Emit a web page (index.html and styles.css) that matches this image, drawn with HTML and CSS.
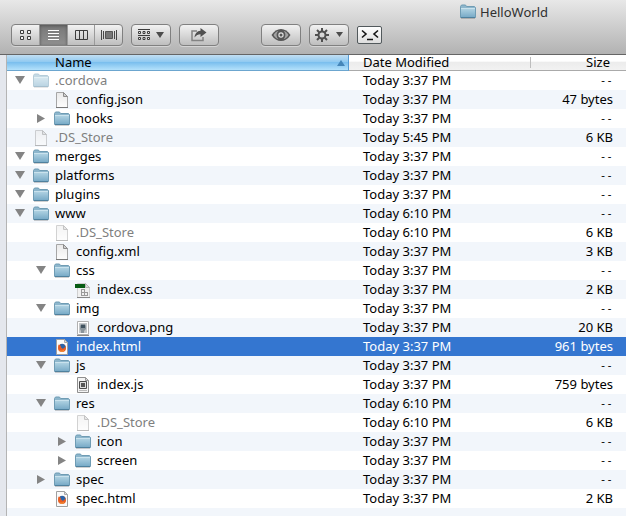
FILE: index.html
```
<!DOCTYPE html>
<html lang="en">
<head>
<meta charset="utf-8">
<title>HelloWorld</title>
<link rel="stylesheet" href="styles.css">
</head>
<body>
<svg class="defs" aria-hidden="true">
  <defs>
    <linearGradient id="folder-front" x1="0" y1="0" x2="0" y2="1"><stop offset="0" stop-color="#b4d5e4"/><stop offset="1" stop-color="#76a9c6"/></linearGradient>
    <linearGradient id="paper" x1="0" y1="0" x2="0" y2="1"><stop offset="0" stop-color="#e9e9e9"/><stop offset="1" stop-color="#fdfdfd"/></linearGradient>
  </defs>
  <symbol id="folder" viewBox="0 0 16 16">
    <path d="M.5 13V2.500l1-1.500h4l1 1.500h8l1 1V13z" fill="#8db6cc" stroke="#6f9cb4"/>
    <path d="M1 4h14v9.500H1z" fill="url(#folder-front)"/>
    <path d="M1 4.500h14" stroke="#c9e2ed"/>
    <path d="M.5 13.500h15" stroke="#4f819e"/>
    <path d="M1 14.500h14" stroke="#000" opacity=".18"/>
  </symbol>
  <symbol id="file" viewBox="0 0 16 16">
    <path d="M2.500.5h7l4 4v11h-11z" fill="url(#paper)" stroke="#a6a6a6"/>
    <path d="M9.500.5v4h4z" fill="#d0d0d0" stroke="#8d8d8d"/>
    <path d="M2 15.500h12" stroke="#777"/>
  </symbol>
  <symbol id="file-css" viewBox="0 0 16 16">
    <path d="M2.500 1.500h8l4 4v10h-12z" fill="#f0f0f0" stroke="#d0d0d0"/>
    <path d="M10.500 1.500v4h4z" fill="#ddd" stroke="#b5b5b5"/>
    <path d="M0 2h10v4H0z" fill="#075c15"/>
    <path d="M6.500 7v7M9.500 7v7M12.500 10v4M6 7.500h4M6 10.500h7M6 13.500h7" stroke="#999" fill="none"/>
    <path d="M2 15.500h13" stroke="#888"/>
  </symbol>
  <symbol id="file-image" viewBox="0 0 16 16">
    <path d="M2.500 1.500h11v13h-11z" fill="#fff" stroke="#b1b1b1"/>
    <path d="M4 3h8v10H4z" fill="#c3c7ca"/>
    <path d="M6 4h4l1 2v3L9 11v2H6v-2L5 9V6z" fill="#8a959c"/>
    <path d="M6 5h4v3H6z" fill="#40525f"/>
    <path d="M2 15.500h12" stroke="#888"/>
  </symbol>
  <symbol id="file-html" viewBox="0 0 16 16">
    <path d="M2.500.5h8l3 3v12h-11z" fill="#fafafa" stroke="#a0a0a0"/>
    <path d="M10.500.5v3h3z" fill="#ddd" stroke="#aaa"/>
    <circle cx="8" cy="9" r="4" fill="#e6652b"/>
    <path d="M6 5.500c2-1.500 5-.5 5.500 2.500L9 10 6.500 8z" fill="#2a63a9"/>
    <path d="M4.500 5.500L7 7.500l-.5 1.500 2 1.500 3-2.500c.5 3-1.500 4.500-3.500 4.500-3 0-4-3-3.500-7z" fill="#ea5c22"/>
    <path d="M5 10.500c1 1.500 3.500 2 5.500 0-1 2.500-4 3-5.500 0z" fill="#f9b23e"/>
  </symbol>
  <symbol id="file-js" viewBox="0 0 16 16">
    <path d="M2.500.5h8l3 3v12h-11z" fill="#f4f4f4" stroke="#8f8f8f"/>
    <path d="M10.500.5v3h3z" fill="#ddd" stroke="#999"/>
    <path d="M4.500 4.500h7v7h-7z" fill="#ddd" stroke="#4c4c4c"/>
    <path d="M6 6h4v4H6z" fill="#555"/>
    <path d="M4 13.500h8" stroke="#bbb"/>
  </symbol>
  <symbol id="open" viewBox="0 0 10 10"><path d="M0 0h10L5 8z" fill="#848484"/></symbol>
  <symbol id="closed" viewBox="0 0 10 10"><path d="M1 0v9l8-4.500z" fill="#848484"/></symbol>
</svg>

<div class="window">
  <header class="titlebar">
    <h1 class="title"><svg class="icon"><use href="#folder"/></svg>HelloWorld</h1>
    <div class="toolbar">
      <div class="group views">
        <button class="tool" aria-label="Icon view"><svg width="12" height="12" viewBox="0 0 12 12"><path d="M1.500 1.500h3v3h-3zM8.500 1.500h3v3h-3zM1.500 7.500h3v3h-3zM8.500 7.500h3v3h-3z" fill="#f4f4f4" stroke="#3c3c3c"/></svg></button>
        <button class="tool active" aria-label="List view" aria-pressed="true"><svg width="12" height="12" viewBox="0 0 12 12"><path d="M1 1.500h11M1 4.500h11M1 7.500h11M1 10.500h11" stroke="#fff"/></svg></button>
        <button class="tool" aria-label="Column view"><svg width="14" height="12" viewBox="0 0 14 12"><path d="M1.500 1.500v9h12v-9zM5.500 1v10M9.500 1v10" fill="none" stroke="#3c3c3c"/></svg></button>
        <button class="tool" aria-label="Cover Flow view"><svg width="16" height="12" viewBox="0 0 16 12"><path d="M.5 1v10M2.500 2v8M13.500 2v8M15.500 1v10" stroke="#484848"/><path d="M4.500 2.500h7v7h-7z" fill="#777" stroke="#555"/></svg></button>
      </div>
      <div class="group"><button class="tool" aria-label="Arrange"><svg width="12" height="12" viewBox="0 0 12 12"><path d="M0 .5h12M0 6.500h12" stroke="#3c3c3c"/><path d="M.5 2.500h2v2h-2zM5 2.500h2v2H5zM9.500 2.500h2v2h-2zM.5 8.500h2v2h-2zM5 8.500h2v2H5zM9.500 8.500h2v2h-2z" fill="#eee" stroke="#3c3c3c"/></svg><svg width="8" height="6" viewBox="0 0 8 6"><path d="M0 0h8L4 6z" fill="#4d4d4d"/></svg></button></div>
      <div class="group"><button class="tool" aria-label="Share"><svg width="18" height="14" viewBox="0 0 18 14"><path d="M7 3H2v9.500h11V9" fill="none" stroke="#838383" stroke-width="1.500"/><path d="M10.500 0l6 4.500-6 4.500V6.300C8 6.300 6.500 7 4.500 9.500 5 5.500 7 3 10.500 2.800z" fill="#505050"/></svg></button></div>
      <div class="group quicklook"><button class="tool" aria-label="Quick Look"><svg width="20" height="14" viewBox="0 0 20 14"><path d="M.5 7C3 3 6.500 1 10 1s7 2 9.500 6c-2.500 4-6 6-9.500 6S3 11 .5 7z" fill="#555"/><path d="M2.500 7C4 4.500 6 3 7.500 2.800 5 5 5 9 7.500 11.200 6 11 4 9.500 2.500 7zM17.500 7C16 4.500 14 3 12.500 2.800 15 5 15 9 12.500 11.200 14 11 16 9.500 17.500 7z" fill="#a2a2a2"/><circle cx="10" cy="7" r="2.700" fill="#e0e0e0"/><circle cx="10" cy="7" r="1.500" fill="#555"/></svg></button></div>
      <div class="group"><button class="tool" aria-label="Action"><svg width="14" height="14" viewBox="0 0 14 14"><circle cx="7" cy="7" r="3.500" fill="none" stroke="#505050" stroke-width="2"/><path d="M7 0v3M7 11v3M0 7h3M11 7h3M2 2l2.200 2.200M9.800 9.800L12 12M2 12l2.200-2.200M9.800 4.200L12 2" stroke="#505050" stroke-width="2"/></svg><svg width="8" height="6" viewBox="0 0 8 6"><path d="M1 0h7L4.500 5z" fill="#4d4d4d"/></svg></button></div>
      <button class="terminal" aria-label="Open in terminal"><svg width="18" height="12" viewBox="0 0 18 12"><path d="M1 1.500l4 3.500-4 3.500M17 1.500L13 5l4 3.500M6 10.500h6" fill="none" stroke="#151515" stroke-width="1.600"/></svg></button>
    </div>
  </header>

  <div class="content">
    <aside class="sidebar"></aside>
    <main class="listing">
      <table class="files">
        <colgroup><col><col class="col-date"><col class="col-size"></colgroup>
        <thead>
          <tr>
            <th class="sorted" aria-sort="ascending"><div class="heading">Name<svg width="8" height="6" viewBox="0 0 8 6"><path d="M0 6h8L4 0z" fill="#4586b9"/></svg></div></th>
            <th>Date Modified</th>
            <th class="size"><div class="size-heading">Size</div></th>
          </tr>
        </thead>
        <tbody>
          <tr class="dim"><td><div class="entry"><button class="toggle" aria-label="Collapse .cordova"><svg><use href="#open"/></svg></button><svg class="icon"><use href="#folder"/></svg><span>.cordova</span></div></td><td>Today 3:37 PM</td><td class="no-size">--</td></tr>
          <tr><td><div class="entry level-1 leaf"><svg class="icon"><use href="#file"/></svg><span>config.json</span></div></td><td>Today 3:37 PM</td><td>47 bytes</td></tr>
          <tr><td><div class="entry level-1"><button class="toggle" aria-label="Expand hooks"><svg><use href="#closed"/></svg></button><svg class="icon"><use href="#folder"/></svg><span>hooks</span></div></td><td>Today 3:37 PM</td><td class="no-size">--</td></tr>
          <tr class="dim"><td><div class="entry leaf"><svg class="icon"><use href="#file"/></svg><span>.DS_Store</span></div></td><td>Today 5:45 PM</td><td>6 KB</td></tr>
          <tr><td><div class="entry"><button class="toggle" aria-label="Collapse merges"><svg><use href="#open"/></svg></button><svg class="icon"><use href="#folder"/></svg><span>merges</span></div></td><td>Today 3:37 PM</td><td class="no-size">--</td></tr>
          <tr><td><div class="entry"><button class="toggle" aria-label="Collapse platforms"><svg><use href="#open"/></svg></button><svg class="icon"><use href="#folder"/></svg><span>platforms</span></div></td><td>Today 3:37 PM</td><td class="no-size">--</td></tr>
          <tr><td><div class="entry"><button class="toggle" aria-label="Collapse plugins"><svg><use href="#open"/></svg></button><svg class="icon"><use href="#folder"/></svg><span>plugins</span></div></td><td>Today 3:37 PM</td><td class="no-size">--</td></tr>
          <tr><td><div class="entry"><button class="toggle" aria-label="Collapse www"><svg><use href="#open"/></svg></button><svg class="icon"><use href="#folder"/></svg><span>www</span></div></td><td>Today 6:10 PM</td><td class="no-size">--</td></tr>
          <tr class="dim"><td><div class="entry level-1 leaf"><svg class="icon"><use href="#file"/></svg><span>.DS_Store</span></div></td><td>Today 6:10 PM</td><td>6 KB</td></tr>
          <tr><td><div class="entry level-1 leaf"><svg class="icon"><use href="#file"/></svg><span>config.xml</span></div></td><td>Today 3:37 PM</td><td>3 KB</td></tr>
          <tr><td><div class="entry level-1"><button class="toggle" aria-label="Collapse css"><svg><use href="#open"/></svg></button><svg class="icon"><use href="#folder"/></svg><span>css</span></div></td><td>Today 3:37 PM</td><td class="no-size">--</td></tr>
          <tr><td><div class="entry level-2 leaf"><svg class="icon"><use href="#file-css"/></svg><span>index.css</span></div></td><td>Today 3:37 PM</td><td>2 KB</td></tr>
          <tr><td><div class="entry level-1"><button class="toggle" aria-label="Collapse img"><svg><use href="#open"/></svg></button><svg class="icon"><use href="#folder"/></svg><span>img</span></div></td><td>Today 3:37 PM</td><td class="no-size">--</td></tr>
          <tr><td><div class="entry level-2 leaf"><svg class="icon"><use href="#file-image"/></svg><span>cordova.png</span></div></td><td>Today 3:37 PM</td><td>20 KB</td></tr>
          <tr class="selected" aria-selected="true"><td><div class="entry level-1 leaf"><svg class="icon"><use href="#file-html"/></svg><span>index.html</span></div></td><td>Today 3:37 PM</td><td>961 bytes</td></tr>
          <tr><td><div class="entry level-1"><button class="toggle" aria-label="Collapse js"><svg><use href="#open"/></svg></button><svg class="icon"><use href="#folder"/></svg><span>js</span></div></td><td>Today 3:37 PM</td><td class="no-size">--</td></tr>
          <tr><td><div class="entry level-2 leaf"><svg class="icon"><use href="#file-js"/></svg><span>index.js</span></div></td><td>Today 3:37 PM</td><td>759 bytes</td></tr>
          <tr><td><div class="entry level-1"><button class="toggle" aria-label="Collapse res"><svg><use href="#open"/></svg></button><svg class="icon"><use href="#folder"/></svg><span>res</span></div></td><td>Today 6:10 PM</td><td class="no-size">--</td></tr>
          <tr class="dim"><td><div class="entry level-2 leaf"><svg class="icon"><use href="#file"/></svg><span>.DS_Store</span></div></td><td>Today 6:10 PM</td><td>6 KB</td></tr>
          <tr><td><div class="entry level-2"><button class="toggle" aria-label="Expand icon"><svg><use href="#closed"/></svg></button><svg class="icon"><use href="#folder"/></svg><span>icon</span></div></td><td>Today 3:37 PM</td><td class="no-size">--</td></tr>
          <tr><td><div class="entry level-2"><button class="toggle" aria-label="Expand screen"><svg><use href="#closed"/></svg></button><svg class="icon"><use href="#folder"/></svg><span>screen</span></div></td><td>Today 3:37 PM</td><td class="no-size">--</td></tr>
          <tr><td><div class="entry level-1"><button class="toggle" aria-label="Expand spec"><svg><use href="#closed"/></svg></button><svg class="icon"><use href="#folder"/></svg><span>spec</span></div></td><td>Today 3:37 PM</td><td class="no-size">--</td></tr>
          <tr><td><div class="entry level-1 leaf"><svg class="icon"><use href="#file-html"/></svg><span>spec.html</span></div></td><td>Today 3:37 PM</td><td>2 KB</td></tr>
        </tbody>
      </table>
      <div class="filler"></div>
    </main>
  </div>
</div>
</body>
</html>
```
FILE: styles.css
```
* { box-sizing: border-box; }

body {
  margin: 0;
  overflow: hidden;
  font: 13px/19px "Noto Sans", "Open Sans", sans-serif;
  color: #000;
  background: #fff;
}

.defs { position: absolute; width: 0; height: 0; }

.window { display: flex; flex-direction: column; height: 100vh; }

.titlebar {
  flex: none;
  background: linear-gradient(#e8e8e8, #b2b2b2);
  border-bottom: 1px solid #656565;
  padding-bottom: 8px;
}

.title {
  display: flex;
  align-items: center;
  justify-content: flex-end;
  gap: 4px;
  height: 24px;
  margin: 0;
  padding-right: 78px;
  font-size: 13px;
  font-weight: 400;
  color: #303030;
}

.icon { flex: none; width: 16px; height: 16px; }

.toolbar { display: flex; align-items: center; gap: 8px; padding-left: 11px; }

.group {
  display: flex;
  width: 40px;
  height: 22px;
  border: 1px solid #808080;
  border-radius: 4px;
  background: linear-gradient(#f2f2f2, #bebebe);
  box-shadow: 0 1px 0 #d5d5d5;
  overflow: hidden;
}

.views { width: 112px; }
.quicklook { margin-left: 34px; }

.tool {
  flex: 1;
  display: flex;
  align-items: center;
  justify-content: center;
  gap: 6px;
  border: 0;
  padding: 0;
  background: none;
}

.tool + .tool { border-left: 1px solid #9a9a9a; }
.tool.active { background: linear-gradient(#777, #8f8f8f); box-shadow: inset 0 1px 3px #555; }

.terminal {
  display: flex;
  align-items: center;
  justify-content: center;
  width: 25px;
  height: 18px;
  padding: 0;
  border: 1px solid #52595c;
  border-radius: 2px;
  background: linear-gradient(#fff, #dedede);
}

.content { flex: 1; display: flex; min-height: 0; }

.sidebar {
  flex: none;
  width: 7px;
  background: #e4e7ed;
  border-right: 1px solid #b4b4b4;
}

.listing { flex: 1; display: flex; flex-direction: column; min-width: 0; }

.files { width: 100%; table-layout: fixed; border-collapse: separate; border-spacing: 0; }
.col-date { width: 181px; }
.col-size { width: 96px; }

th {
  height: 16px;
  padding: 0 0 0 14px;
  font-weight: 400;
  line-height: 15px;
  text-align: left;
  background: linear-gradient(#fff 40%, #ececec 50%, #f2f2f2);
  border-bottom: 1px solid #aaa;
}

.sorted {
  padding-left: 48px;
  background: linear-gradient(#c1def2, #91caf1 45%, #7bbfee 50%, #b4e1fb);
  border-right: 1px solid #579bd3;
  border-bottom-color: #6ca6cf;
}

.heading { display: flex; align-items: center; justify-content: space-between; padding-right: 3px; }

.size { padding: 0; }
.size-heading { border-left: 1px solid #bdbdbd; height: 11px; line-height: 11px; text-align: right; padding-right: 16px; }

td { height: 19px; padding: 0 0 0 14px; white-space: nowrap; }
td:first-child { padding: 0; }
td:last-child { padding: 0 13px 0 0; text-align: right; }
td.no-size { font-family: "DejaVu Sans Mono", monospace; font-size: 11px; }
tbody tr:nth-child(even), .filler { background: #f2f6fb; }
.filler { flex: 1; }

.entry { display: flex; align-items: center; height: 19px; padding-left: 8px; }
.entry .icon { margin-right: 6px; }
.level-1 { padding-left: 29px; }
.level-2 { padding-left: 50px; }
.leaf::before { content: ""; width: 18px; }

.toggle { width: 10px; height: 10px; margin-right: 8px; padding: 0; border: 0; background: none; }
.toggle svg { display: block; width: 10px; height: 10px; }

.dim span { color: #808080; }
.dim .icon { opacity: .5; }

.files .selected { background: #3476d0; color: #fff; }
```
